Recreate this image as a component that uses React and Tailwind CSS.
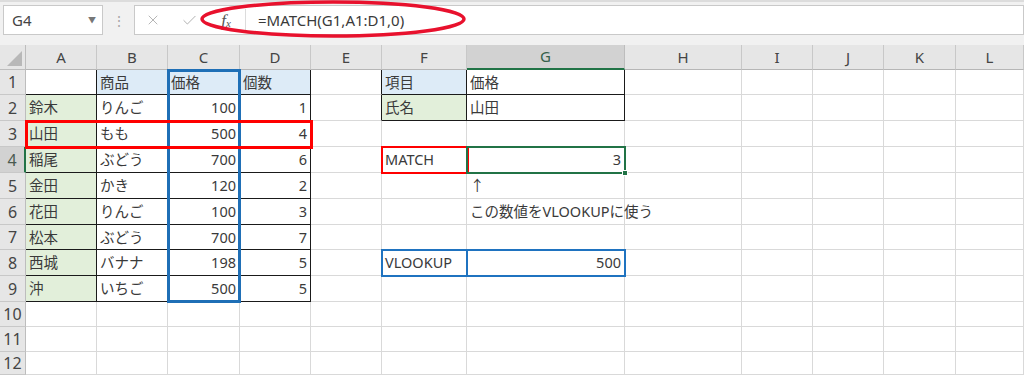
import { X, Check } from "lucide-react";

const cols = [
  { k: "", w: 26 },
  { k: "A", w: 71 },
  { k: "B", w: 71 },
  { k: "C", w: 72 },
  { k: "D", w: 71 },
  { k: "E", w: 71 },
  { k: "F", w: 85 },
  { k: "G", w: 158 },
  { k: "H", w: 117 },
  { k: "I", w: 71 },
  { k: "J", w: 71 },
  { k: "K", w: 72 },
  { k: "L", w: 68 },
];

const rowHeights = [25, 26, 26, 26, 26, 26, 25, 26, 26, 25, 25, 23];

const data = {
  B1: "商品", C1: "価格", D1: "個数",
  A2: "鈴木", B2: "りんご", C2: "100", D2: "1",
  A3: "山田", B3: "もも", C3: "500", D3: "4",
  A4: "稲尾", B4: "ぶどう", C4: "700", D4: "6",
  A5: "金田", B5: "かき", C5: "120", D5: "2",
  A6: "花田", B6: "りんご", C6: "100", D6: "3",
  A7: "松本", B7: "ぶどう", C7: "700", D7: "7",
  A8: "西城", B8: "バナナ", C8: "198", D8: "5",
  A9: "沖", B9: "いちご", C9: "500", D9: "5",
  F1: "項目", G1: "価格",
  F2: "氏名", G2: "山田",
  F4: "MATCH", G4: "3",
  G5: "↑",
  G6: "この数値をVLOOKUPに使う",
  F8: "VLOOKUP", G8: "500",
};

const blueFill = ["B1", "C1", "D1", "F1"];
const greenFill = ["A2", "A3", "A4", "A5", "A6", "A7", "A8", "A9", "F2"];

// cells that carry black table borders
const inTable = (c, r) => {
  if (c === "A" && r >= 2 && r <= 9) return true;
  if ("BCD".includes(c) && c && r >= 1 && r <= 9) return true;
  if ((c === "F" || c === "G") && r >= 1 && r <= 2) return true;
  return false;
};

const letters = cols.slice(1).map((c) => c.k);

function Cell({ col, row }) {
  const id = col + row;
  const text = data[id];
  const idx = letters.indexOf(col);
  const next = letters[idx + 1];
  const rightBlack = inTable(col, row) || (next && inTable(next, row));
  const bottomBlack = inTable(col, row) || inTable(col, row + 1);
  const numeric = text && /^\d+$/.test(text);

  let bg = "";
  if (blueFill.includes(id)) bg = "bg-[#ddebf7]";
  if (greenFill.includes(id)) bg = "bg-[#e2efda]";

  return (
    <div
      className={`flex items-center border-r border-b px-[3px] overflow-visible whitespace-nowrap text-[14.5px] leading-none text-[#3a3a3a] ${bg} ${
        rightBlack ? "border-r-[#1a1a1a]" : "border-r-[#d9d9d9]"
      } ${bottomBlack ? "border-b-[#1a1a1a]" : "border-b-[#d9d9d9]"} ${
        numeric ? "justify-end" : "justify-start"
      }`}
    >
      {text}
    </div>
  );
}

export default function App() {
  const gridCols = cols.map((c) => `${c.w}px`).join(" ");
  const gridRows = ["25px", ...rowHeights.map((h) => `${h}px`)].join(" ");

  return (
    <div className="w-[1024px] h-[375px] overflow-hidden bg-white font-['Noto_Sans','Noto_Sans_CJK_JP',sans-serif] relative">
      {/* Formula bar */}
      <div className="h-[45px] bg-[#f1f1f1] border-t-2 border-[#dcdcdc] flex items-start pt-[3px] pl-[3px]">
        <div className="w-[100px] h-[30px] bg-white border border-[#c9c9c9] flex items-center justify-between pl-[8px] pr-[6px]">
          <span className="text-[15px] text-[#444]">G4</span>
          <span className="text-[8px] text-[#777]">▼</span>
        </div>
        <div className="w-[31px] h-[30px] flex items-center justify-center text-[#a8a8a8] text-[14px]">⋮</div>
        <div className="flex-1 h-[30px] bg-white border border-[#c9c9c9] flex items-center">
          <div className="w-[36px] flex justify-center text-[#b0b0b0]">
            <X size={16} strokeWidth={1.4} />
          </div>
          <div className="w-[36px] flex justify-center text-[#b0b0b0]">
            <Check size={17} strokeWidth={1.4} />
          </div>
          <div className="w-[38px] flex items-center justify-center text-[#555] italic font-['Liberation_Serif',serif] leading-none">
            <span className="text-[17px]">f</span>
            <span className="text-[11px] translate-y-[3px]">x</span>
          </div>
          <div className="w-px h-[22px] bg-[#dcdcdc]" />
          <div className="pl-[12px] text-[15px] text-[#3a3a3a]">=MATCH(G1,A1:D1,0)</div>
        </div>
      </div>

      {/* Red ellipse marker */}
      <svg className="absolute left-0 top-0" width="1024" height="45">
        <ellipse cx="333" cy="19" rx="131" ry="17" fill="none" stroke="#e8112d" strokeWidth="3.5" />
      </svg>

      {/* Sheet grid */}
      <div
        className="relative grid bg-white"
        style={{ gridTemplateColumns: gridCols, gridTemplateRows: gridRows }}
      >
        {/* header row */}
        {cols.map((c, i) =>
          i === 0 ? (
            <div key="corner" className="relative bg-[#e6e6e6] border-r border-b border-[#bdbdbd]">
              <div className="absolute right-[3px] bottom-[3px] w-0 h-0 border-l-[15px] border-l-transparent border-b-[15px] border-b-[#b8b8b8]" />
            </div>
          ) : c.k === "G" ? (
            <div
              key={c.k}
              className="flex items-center justify-center bg-[#d2d2d2] border-r border-r-[#bdbdbd] border-b-2 border-b-[#217346] text-[15px] text-[#35604a]"
            >
              {c.k}
            </div>
          ) : (
            <div
              key={c.k}
              className="flex items-center justify-center bg-[#e6e6e6] border-r border-r-[#c8c8c8] border-b border-b-[#b6b6b6] text-[15px] text-[#444]"
            >
              {c.k}
            </div>
          )
        )}

        {rowHeights.map((h, ri) => {
          const row = ri + 1;
          return [
            row === 4 ? (
              <div
                key={`h${row}`}
                className="flex items-center justify-center bg-[#d2d2d2] border-r-2 border-r-[#217346] border-b border-b-[#c8c8c8] text-[16px] text-[#4a5a50]"
              >
                {row}
              </div>
            ) : (
              <div
                key={`h${row}`}
                className="flex items-center justify-center bg-[#e6e6e6] border-r border-r-[#bdbdbd] border-b border-b-[#c8c8c8] text-[16px] text-[#444]"
              >
                {row}
              </div>
            ),
            ...letters.map((l) => <Cell key={l + row} col={l} row={row} />),
          ];
        })}

        {/* highlight frames */}
        <div className="absolute left-[167px] top-[24px] w-[74px] h-[234px] border-[3px] border-[#1f6fb6] pointer-events-none" />
        <div className="absolute left-[25px] top-[75px] w-[288px] h-[29px] border-[3px] border-[#ff0000] pointer-events-none" />
        <div className="absolute left-[381px] top-[101px] w-[88px] h-[28px] border-2 border-[#ff0000] pointer-events-none" />
        <div className="absolute left-[466px] top-[101px] w-[160px] h-[28px] border-2 border-[#217346] pointer-events-none">
          <div className="absolute -right-[4px] -bottom-[4px] w-[6px] h-[6px] bg-[#217346] border border-white" />
        </div>
        <div className="absolute left-[381px] top-[204px] w-[87px] h-[28px] border-2 border-[#1f73c0] pointer-events-none" />
        <div className="absolute left-[466px] top-[204px] w-[160px] h-[28px] border-2 border-[#1f73c0] pointer-events-none" />
      </div>
    </div>
  );
}
